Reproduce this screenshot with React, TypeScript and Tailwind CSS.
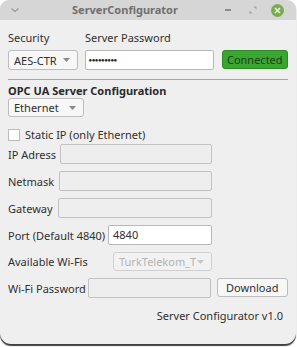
import React from 'react';

const font = { fontFamily: '"Noto Sans", "Open Sans", sans-serif' };

function Combo({ value, className = '', disabled = false }: { value: string; className?: string; disabled?: boolean }) {
  return (
    <div
      className={`flex items-center justify-between rounded-[3px] border pl-[5px] pr-[7px] ${
        disabled ? 'border-[#d0d0d0] bg-[#f2f2f2] text-[#b4b4b4]' : 'border-[#bdbdbd] bg-[#f7f7f7] text-[#2e2e2e]'
      } ${className}`}
    >
      <span>{value}</span>
      <svg width="7" height="4" viewBox="0 0 7 4">
        <path d="M0 0 L7 0 L3.5 4 Z" fill={disabled ? '#c8c8c8' : '#8a8a8a'} />
      </svg>
    </div>
  );
}

function Field({ label, inputClass, value, enabled = false }: { label: string; inputClass: string; value?: string; enabled?: boolean }) {
  return (
    <div className="flex items-center">
      <span className="whitespace-nowrap">{label}</span>
      <div
        className={`ml-auto h-[20px] rounded-[2px] border px-[4px] leading-[18px] ${
          enabled ? 'border-[#b8b8b8] bg-white' : 'border-[#c2c2c2] bg-[#eeeeee]'
        } ${inputClass}`}
      >
        {value}
      </div>
    </div>
  );
}

export default function App() {
  return (
    <div className="h-[347px] w-[297px] bg-white" style={font}>
      <div className="flex h-[344px] w-[296px] flex-col overflow-hidden rounded-t-[9px] rounded-b-[11px] bg-[#efefef] text-[11px] leading-[15px] text-[#303030] shadow-[0_2px_1px_rgba(0,0,0,0.75)]">
        {/* Title bar */}
        <div className="relative flex h-[20px] items-center bg-[#d6d6d6]">
          <svg width="8" height="5" viewBox="0 0 8 5" className="ml-[11px]">
            <path d="M0.5 0.5 L4 3.5 L7.5 0.5" stroke="#9a9a9a" strokeWidth="1.3" fill="none" />
          </svg>
          <span className="absolute left-[72px] top-[2px] text-[11px] font-bold text-[#6f6f6f]">ServerConfigurator</span>
          <div className="ml-auto flex items-center">
            <div className="h-[1.5px] w-[6px] bg-[#8c8c8c]" />
            <svg width="8" height="8" viewBox="0 0 8 8" className="ml-[18px]">
              <path d="M4.5 0.5 L7.5 0.5 L7.5 3.5 Z M0.5 4.5 L0.5 7.5 L3.5 7.5 Z" fill="#a0a0a0" />
            </svg>
            <div className="ml-[14px] mr-[12px] flex h-[13px] w-[13px] items-center justify-center rounded-full bg-[#7bad4f]">
              <svg width="7" height="7" viewBox="0 0 7 7">
                <path d="M1 1 L6 6 M6 1 L1 6" stroke="#e9f1e1" strokeWidth="1.6" />
              </svg>
            </div>
          </div>
        </div>

        <div className="flex flex-1 flex-col px-[8px]">
          {/* Security / password */}
          <div className="mt-[10px] flex">
            <span className="w-[77px]">Security</span>
            <span>Server Password</span>
          </div>
          <div className="mt-[5px] flex h-[20px] items-stretch">
            <Combo value="AES-CTR" className="w-[70px]" />
            <div className="ml-[7px] flex w-[130px] items-center rounded-[2px] border border-[#b8b8b8] bg-white px-[3px]">
              <span className="text-[6px] tracking-[-0.5px] text-[#222]">●●●●●●●●●</span>
            </div>
            <div className="ml-[8px] flex h-[19px] w-[67px] items-center justify-center rounded-[3px] border border-[#2a8c22] bg-[#3aa632] text-[#1d3f19]">
              Connected
            </div>
          </div>
          <div className="mt-[9px] h-[1px] bg-[#a6a6a6]" />

          {/* OPC UA section */}
          <div className="mt-[3px] font-bold text-[#2a2a2a]">OPC UA Server Configuration</div>
          <Combo value="Ethernet" className="h-[19px] w-[76px]" />
          <div className="mt-[10px] flex items-center">
            <div className="h-[12px] w-[12px] border border-[#bcbcbc] bg-white" />
            <span className="ml-[5px]">Static IP (only Ethernet)</span>
          </div>

          <div className="mt-[2px] flex w-[204px] flex-col gap-[7px]">
            <Field label="IP Adress" inputClass="w-[152px]" />
            <Field label="Netmask" inputClass="w-[153px]" />
            <Field label="Gateway" inputClass="w-[154px]" />
            <Field label="Port (Default 4840)" inputClass="w-[104px]" value="4840" enabled />
            <div className="flex items-center">
              <span>Available Wi-Fis</span>
              <Combo value="TurkTelekom_T" className="ml-auto h-[19px] w-[99px]" disabled />
            </div>
          </div>
          <div className="mt-[7px] flex items-center">
            <div className="w-[204px]">
              <Field label="Wi-Fi Password" inputClass="w-[123px]" />
            </div>
            <div className="ml-[6px] flex h-[19px] w-[72px] items-center justify-center self-start rounded-[3px] border border-[#bdbdbd] bg-[#f7f7f7]">
              Download
            </div>
          </div>
          <div className="mt-[10px] pr-[5px] text-right">Server Configurator v1.0</div>
        </div>
      </div>
    </div>
  );
}
